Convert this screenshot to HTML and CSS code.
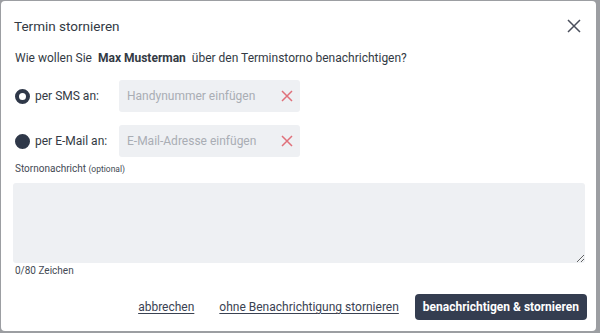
FILE: index.html
```html
<!DOCTYPE html>
<html lang="de">
<head>
  <meta charset="UTF-8" />
  <meta name="viewport" content="width=device-width, initial-scale=1.0"/>
  <title>Termin stornieren</title>
  <link rel="stylesheet" href="styles.css">
</head>
<body>

  <div class="modal">
    <div class="modal-header">
      <h2>Termin stornieren</h2>
      <button class="close-btn" aria-label="Schließen">
        <svg width="14" height="14" viewBox="0 0 14 14"><path d="M1 1 L13 13 M13 1 L1 13" stroke="#4a4f5c" stroke-width="1.5" fill="none"/></svg>
      </button>
    </div>

    <p class="question">Wie wollen Sie <b>Max Musterman</b> über den Terminstorno benachrichtigen?</p>

    <div class="channel">
      <label class="channel-label"><span class="radio"></span>per SMS an:</label>
      <div class="field">
        <input type="text" placeholder="Handynummer einfügen">
        <svg class="clear" width="12" height="12" viewBox="0 0 12 12"><path d="M1 1 L11 11 M11 1 L1 11" stroke="#e0707a" stroke-width="1.5" fill="none"/></svg>
      </div>
    </div>

    <div class="channel">
      <label class="channel-label"><span class="radio checked"></span>per E-Mail an:</label>
      <div class="field">
        <input type="text" placeholder="E-Mail-Adresse einfügen">
        <svg class="clear" width="12" height="12" viewBox="0 0 12 12"><path d="M1 1 L11 11 M11 1 L1 11" stroke="#e0707a" stroke-width="1.5" fill="none"/></svg>
      </div>
    </div>

    <label class="msg-label" for="msg">Stornonachricht <small>(optional)</small></label>
    <textarea id="msg"></textarea>
    <div class="counter">0/80 Zeichen</div>

    <div class="actions">
      <a href="#" class="link">abbrechen</a>
      <a href="#" class="link">ohne Benachrichtigung stornieren</a>
      <button class="primary-btn">benachrichtigen &amp; stornieren</button>
    </div>
  </div>

</body>
</html>
```

FILE: styles.css
```css
* {
  margin: 0;
  padding: 0;
  box-sizing: border-box;
  font-family: Roboto, 'Liberation Sans', sans-serif;
}

body {
  background-color: #9c9ea2;
  padding: 1px 4px 2px 1px;
  height: 100vh;
}

.modal {
  background-color: white;
  border-radius: 4px;
  height: 330px;
  padding: 16px 11px 11px 12px;
  display: flex;
  flex-direction: column;
  color: #333a44;
}

.modal-header {
  display: flex;
  justify-content: space-between;
  align-items: center;
  height: 18px;
  padding-left: 1px;
}

.modal-header h2 {
  font-size: 13.5px;
  font-weight: normal;
  color: #333a44;
}

.close-btn {
  background: none;
  border: none;
  width: 14px;
  height: 14px;
  margin-right: 4px;
  display: flex;
}

.question {
  margin-top: 14px;
  line-height: 18px;
  font-size: 12px;
  padding-left: 2px;
  color: #333a44;
}

.question b {
  margin: 0 3px;
  font-weight: bold;
}

.channel {
  display: flex;
  align-items: center;
  margin-top: 13px;
  height: 32px;
}

.channel-label {
  display: flex;
  align-items: center;
  gap: 5px;
  width: 106px;
  padding-left: 2px;
  font-size: 12px;
  color: #333a44;
}

.radio {
  width: 15px;
  height: 15px;
  border-radius: 50%;
  border: 4px solid #2f3849;
  background-color: white;
}

.radio.checked {
  background-color: #2f3849;
}

.field {
  display: flex;
  align-items: center;
  width: 181px;
  height: 32px;
  background-color: #eef0f3;
  border-radius: 3px;
  padding: 0 7px 0 8px;
}

.field input {
  flex: 1;
  min-width: 0;
  border: none;
  background: none;
  outline: none;
  font-size: 12px;
  color: #333a44;
}

.field input::placeholder {
  color: #a9adb4;
}

.msg-label {
  margin-top: 5px;
  font-size: 10px;
  line-height: 14px;
  padding-left: 2px;
  color: #444a54;
}

.msg-label small {
  font-size: 8.5px;
}

textarea {
  margin-top: 7px;
  height: 80px;
  width: 100%;
  border: none;
  border-radius: 3px;
  background-color: #eef0f3;
  resize: vertical;
  outline: none;
  padding: 6px 8px;
}

.counter {
  margin-top: 1px;
  font-size: 10px;
  line-height: 14px;
  padding-left: 2px;
  color: #444a54;
}

.actions {
  margin-top: 16px;
  display: flex;
  justify-content: flex-end;
  align-items: center;
  margin-right: -2px;
}

.link {
  color: #3a4252;
  font-size: 12px;
  text-decoration: underline;
  text-underline-offset: 2px;
  margin-right: 25px;
}

.link:nth-child(2) {
  margin-right: 16px;
}

.primary-btn {
  height: 26px;
  padding: 0 8px;
  background-color: #343d50;
  color: white;
  border: none;
  border-radius: 4px;
  font-size: 12px;
  font-weight: bold;
}
```
